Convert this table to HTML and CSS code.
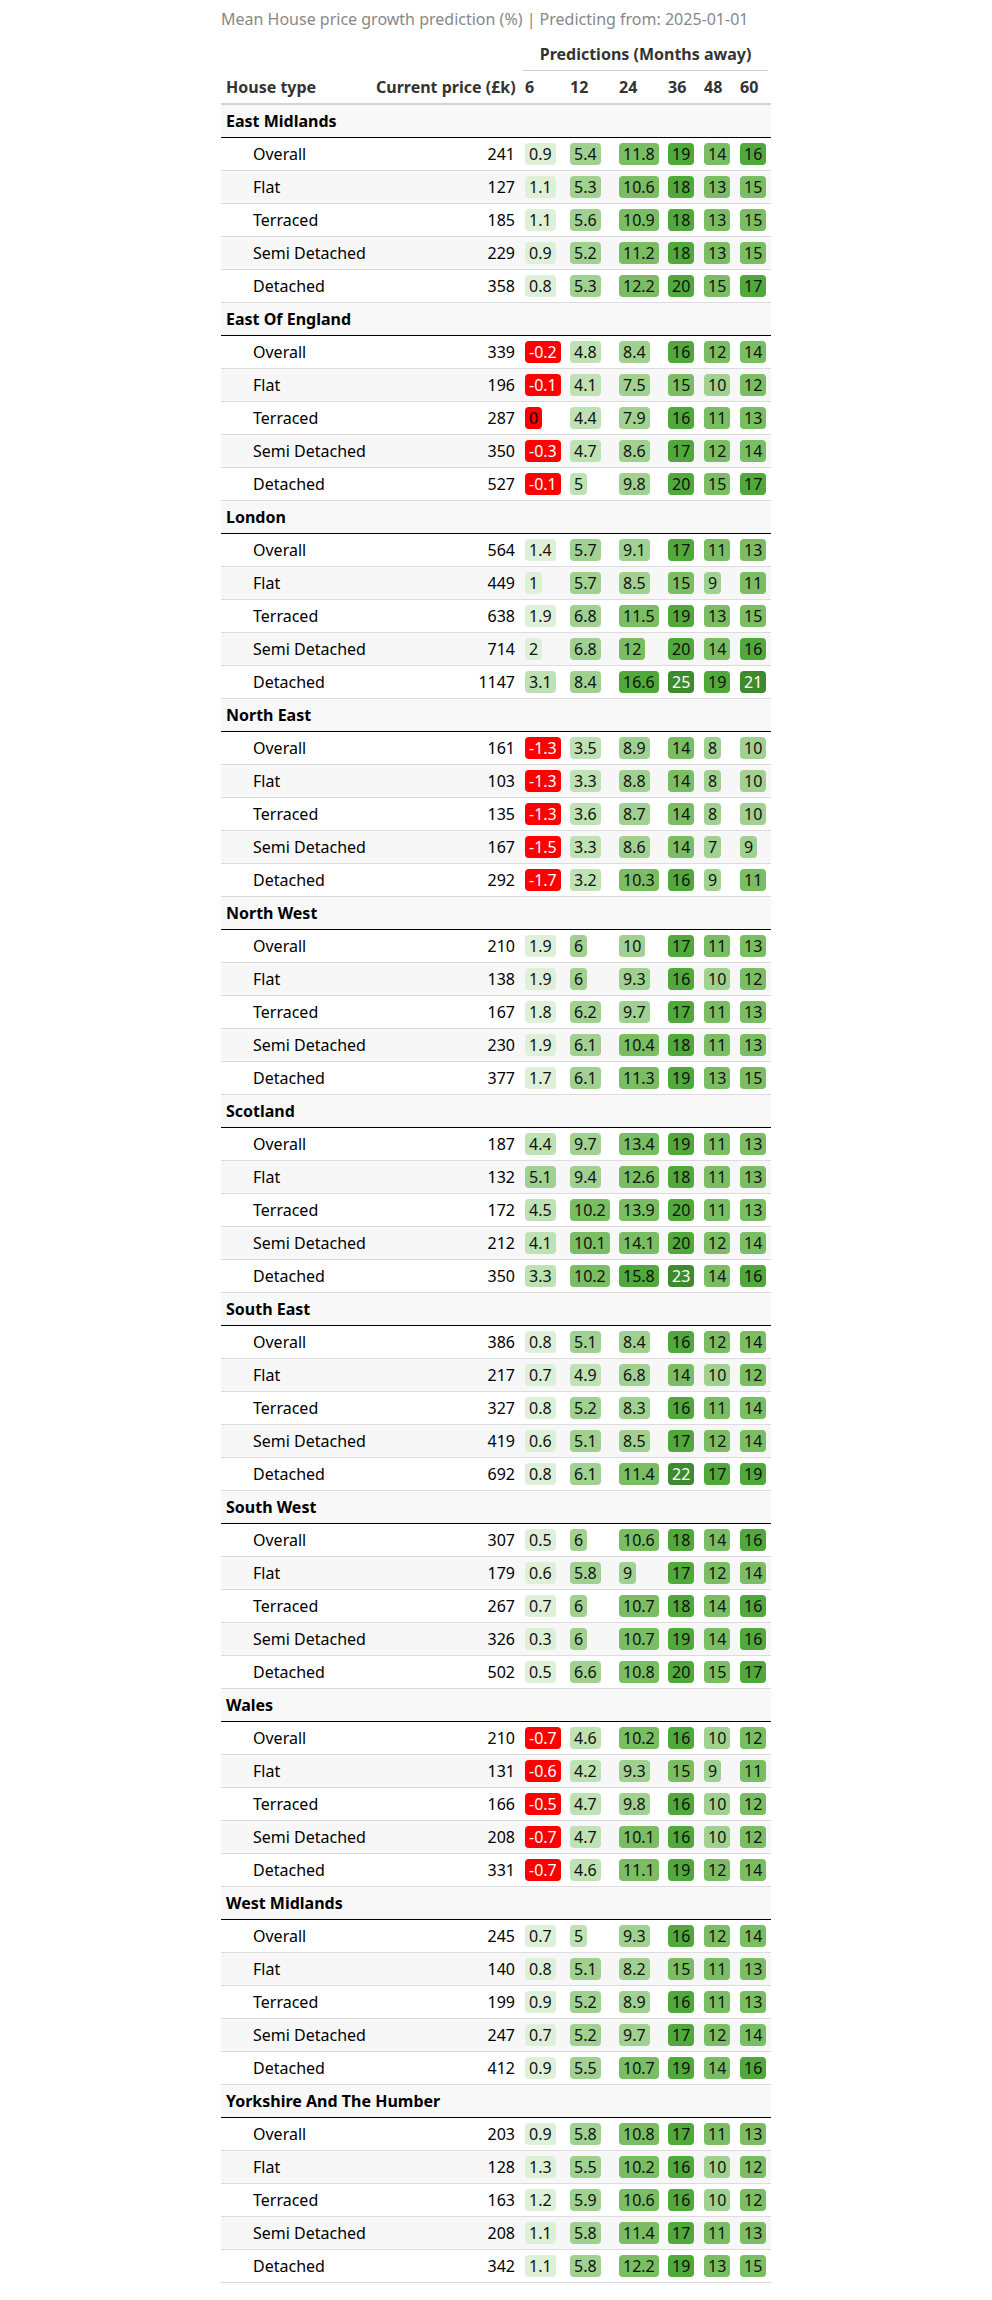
FILE: index.html
```html
<!DOCTYPE html>
<html lang="en">
<head>
<meta charset="utf-8">
<title>Mean House price growth prediction</title>
<link rel="stylesheet" href="styles.css">
</head>
<body>
<div class="wrap">
<div class="title">Mean House price growth prediction (%) | Predicting from: 2025-01-01</div>
<table class="gt">
<colgroup>
<col class="w-stub"><col class="w-price"><col class="w-6"><col class="w-12"><col class="w-24"><col class="w-36"><col class="w-48"><col class="w-60">
</colgroup>
<thead>
<tr>
<th rowspan="2" class="lbl left">House type</th>
<th rowspan="2" class="lbl right">Current price (£k)</th>
<th colspan="6" class="spanner"><div class="spanner-line">Predictions (Months away)</div></th>
</tr>
<tr>
<th class="lbl left">6</th><th class="lbl left">12</th><th class="lbl left">24</th><th class="lbl left">36</th><th class="lbl left">48</th><th class="lbl left">60</th>
</tr>
</thead>

<tbody>
<tr class="grp"><td colspan="8">East Midlands</td></tr>
<tr class="row"><td class="stub">Overall</td><td class="num">241</td><td><span class="p c1">0.9</span></td><td><span class="p c3">5.4</span></td><td><span class="p c4">11.8</span></td><td><span class="p c5">19</span></td><td><span class="p c4">14</span></td><td><span class="p c5">16</span></td></tr>
<tr class="row"><td class="stub">Flat</td><td class="num">127</td><td><span class="p c1">1.1</span></td><td><span class="p c3">5.3</span></td><td><span class="p c4">10.6</span></td><td><span class="p c5">18</span></td><td><span class="p c4">13</span></td><td><span class="p c4">15</span></td></tr>
<tr class="row"><td class="stub">Terraced</td><td class="num">185</td><td><span class="p c1">1.1</span></td><td><span class="p c3">5.6</span></td><td><span class="p c4">10.9</span></td><td><span class="p c5">18</span></td><td><span class="p c4">13</span></td><td><span class="p c4">15</span></td></tr>
<tr class="row"><td class="stub">Semi Detached</td><td class="num">229</td><td><span class="p c1">0.9</span></td><td><span class="p c3">5.2</span></td><td><span class="p c4">11.2</span></td><td><span class="p c5">18</span></td><td><span class="p c4">13</span></td><td><span class="p c4">15</span></td></tr>
<tr class="row"><td class="stub">Detached</td><td class="num">358</td><td><span class="p c1">0.8</span></td><td><span class="p c3">5.3</span></td><td><span class="p c4">12.2</span></td><td><span class="p c5">20</span></td><td><span class="p c4">15</span></td><td><span class="p c5">17</span></td></tr>
</tbody>

<tbody>
<tr class="grp"><td colspan="8">East Of England</td></tr>
<tr class="row"><td class="stub">Overall</td><td class="num">339</td><td><span class="p neg">-0.2</span></td><td><span class="p c2">4.8</span></td><td><span class="p c3">8.4</span></td><td><span class="p c5">16</span></td><td><span class="p c4">12</span></td><td><span class="p c4">14</span></td></tr>
<tr class="row"><td class="stub">Flat</td><td class="num">196</td><td><span class="p neg">-0.1</span></td><td><span class="p c2">4.1</span></td><td><span class="p c3">7.5</span></td><td><span class="p c4">15</span></td><td><span class="p c3">10</span></td><td><span class="p c4">12</span></td></tr>
<tr class="row"><td class="stub">Terraced</td><td class="num">287</td><td><span class="p zero">0</span></td><td><span class="p c2">4.4</span></td><td><span class="p c3">7.9</span></td><td><span class="p c5">16</span></td><td><span class="p c4">11</span></td><td><span class="p c4">13</span></td></tr>
<tr class="row"><td class="stub">Semi Detached</td><td class="num">350</td><td><span class="p neg">-0.3</span></td><td><span class="p c2">4.7</span></td><td><span class="p c3">8.6</span></td><td><span class="p c5">17</span></td><td><span class="p c4">12</span></td><td><span class="p c4">14</span></td></tr>
<tr class="row"><td class="stub">Detached</td><td class="num">527</td><td><span class="p neg">-0.1</span></td><td><span class="p c2">5</span></td><td><span class="p c3">9.8</span></td><td><span class="p c5">20</span></td><td><span class="p c4">15</span></td><td><span class="p c5">17</span></td></tr>
</tbody>

<tbody>
<tr class="grp"><td colspan="8">London</td></tr>
<tr class="row"><td class="stub">Overall</td><td class="num">564</td><td><span class="p c1">1.4</span></td><td><span class="p c3">5.7</span></td><td><span class="p c3">9.1</span></td><td><span class="p c5">17</span></td><td><span class="p c4">11</span></td><td><span class="p c4">13</span></td></tr>
<tr class="row"><td class="stub">Flat</td><td class="num">449</td><td><span class="p c1">1</span></td><td><span class="p c3">5.7</span></td><td><span class="p c3">8.5</span></td><td><span class="p c4">15</span></td><td><span class="p c3">9</span></td><td><span class="p c4">11</span></td></tr>
<tr class="row"><td class="stub">Terraced</td><td class="num">638</td><td><span class="p c1">1.9</span></td><td><span class="p c3">6.8</span></td><td><span class="p c4">11.5</span></td><td><span class="p c5">19</span></td><td><span class="p c4">13</span></td><td><span class="p c4">15</span></td></tr>
<tr class="row"><td class="stub">Semi Detached</td><td class="num">714</td><td><span class="p c1">2</span></td><td><span class="p c3">6.8</span></td><td><span class="p c4">12</span></td><td><span class="p c5">20</span></td><td><span class="p c4">14</span></td><td><span class="p c5">16</span></td></tr>
<tr class="row"><td class="stub">Detached</td><td class="num">1147</td><td><span class="p c2">3.1</span></td><td><span class="p c3">8.4</span></td><td><span class="p c5">16.6</span></td><td><span class="p c6">25</span></td><td><span class="p c5">19</span></td><td><span class="p c6">21</span></td></tr>
</tbody>

<tbody>
<tr class="grp"><td colspan="8">North East</td></tr>
<tr class="row"><td class="stub">Overall</td><td class="num">161</td><td><span class="p neg">-1.3</span></td><td><span class="p c2">3.5</span></td><td><span class="p c3">8.9</span></td><td><span class="p c4">14</span></td><td><span class="p c3">8</span></td><td><span class="p c3">10</span></td></tr>
<tr class="row"><td class="stub">Flat</td><td class="num">103</td><td><span class="p neg">-1.3</span></td><td><span class="p c2">3.3</span></td><td><span class="p c3">8.8</span></td><td><span class="p c4">14</span></td><td><span class="p c3">8</span></td><td><span class="p c3">10</span></td></tr>
<tr class="row"><td class="stub">Terraced</td><td class="num">135</td><td><span class="p neg">-1.3</span></td><td><span class="p c2">3.6</span></td><td><span class="p c3">8.7</span></td><td><span class="p c4">14</span></td><td><span class="p c3">8</span></td><td><span class="p c3">10</span></td></tr>
<tr class="row"><td class="stub">Semi Detached</td><td class="num">167</td><td><span class="p neg">-1.5</span></td><td><span class="p c2">3.3</span></td><td><span class="p c3">8.6</span></td><td><span class="p c4">14</span></td><td><span class="p c3">7</span></td><td><span class="p c3">9</span></td></tr>
<tr class="row"><td class="stub">Detached</td><td class="num">292</td><td><span class="p neg">-1.7</span></td><td><span class="p c2">3.2</span></td><td><span class="p c4">10.3</span></td><td><span class="p c5">16</span></td><td><span class="p c3">9</span></td><td><span class="p c4">11</span></td></tr>
</tbody>

<tbody>
<tr class="grp"><td colspan="8">North West</td></tr>
<tr class="row"><td class="stub">Overall</td><td class="num">210</td><td><span class="p c1">1.9</span></td><td><span class="p c3">6</span></td><td><span class="p c3">10</span></td><td><span class="p c5">17</span></td><td><span class="p c4">11</span></td><td><span class="p c4">13</span></td></tr>
<tr class="row"><td class="stub">Flat</td><td class="num">138</td><td><span class="p c1">1.9</span></td><td><span class="p c3">6</span></td><td><span class="p c3">9.3</span></td><td><span class="p c5">16</span></td><td><span class="p c3">10</span></td><td><span class="p c4">12</span></td></tr>
<tr class="row"><td class="stub">Terraced</td><td class="num">167</td><td><span class="p c1">1.8</span></td><td><span class="p c3">6.2</span></td><td><span class="p c3">9.7</span></td><td><span class="p c5">17</span></td><td><span class="p c4">11</span></td><td><span class="p c4">13</span></td></tr>
<tr class="row"><td class="stub">Semi Detached</td><td class="num">230</td><td><span class="p c1">1.9</span></td><td><span class="p c3">6.1</span></td><td><span class="p c4">10.4</span></td><td><span class="p c5">18</span></td><td><span class="p c4">11</span></td><td><span class="p c4">13</span></td></tr>
<tr class="row"><td class="stub">Detached</td><td class="num">377</td><td><span class="p c1">1.7</span></td><td><span class="p c3">6.1</span></td><td><span class="p c4">11.3</span></td><td><span class="p c5">19</span></td><td><span class="p c4">13</span></td><td><span class="p c4">15</span></td></tr>
</tbody>

<tbody>
<tr class="grp"><td colspan="8">Scotland</td></tr>
<tr class="row"><td class="stub">Overall</td><td class="num">187</td><td><span class="p c2">4.4</span></td><td><span class="p c3">9.7</span></td><td><span class="p c4">13.4</span></td><td><span class="p c5">19</span></td><td><span class="p c4">11</span></td><td><span class="p c4">13</span></td></tr>
<tr class="row"><td class="stub">Flat</td><td class="num">132</td><td><span class="p c3">5.1</span></td><td><span class="p c3">9.4</span></td><td><span class="p c4">12.6</span></td><td><span class="p c5">18</span></td><td><span class="p c4">11</span></td><td><span class="p c4">13</span></td></tr>
<tr class="row"><td class="stub">Terraced</td><td class="num">172</td><td><span class="p c2">4.5</span></td><td><span class="p c4">10.2</span></td><td><span class="p c4">13.9</span></td><td><span class="p c5">20</span></td><td><span class="p c4">11</span></td><td><span class="p c4">13</span></td></tr>
<tr class="row"><td class="stub">Semi Detached</td><td class="num">212</td><td><span class="p c2">4.1</span></td><td><span class="p c4">10.1</span></td><td><span class="p c4">14.1</span></td><td><span class="p c5">20</span></td><td><span class="p c4">12</span></td><td><span class="p c4">14</span></td></tr>
<tr class="row"><td class="stub">Detached</td><td class="num">350</td><td><span class="p c2">3.3</span></td><td><span class="p c4">10.2</span></td><td><span class="p c5">15.8</span></td><td><span class="p c6">23</span></td><td><span class="p c4">14</span></td><td><span class="p c5">16</span></td></tr>
</tbody>

<tbody>
<tr class="grp"><td colspan="8">South East</td></tr>
<tr class="row"><td class="stub">Overall</td><td class="num">386</td><td><span class="p c1">0.8</span></td><td><span class="p c3">5.1</span></td><td><span class="p c3">8.4</span></td><td><span class="p c5">16</span></td><td><span class="p c4">12</span></td><td><span class="p c4">14</span></td></tr>
<tr class="row"><td class="stub">Flat</td><td class="num">217</td><td><span class="p c1">0.7</span></td><td><span class="p c2">4.9</span></td><td><span class="p c3">6.8</span></td><td><span class="p c4">14</span></td><td><span class="p c3">10</span></td><td><span class="p c4">12</span></td></tr>
<tr class="row"><td class="stub">Terraced</td><td class="num">327</td><td><span class="p c1">0.8</span></td><td><span class="p c3">5.2</span></td><td><span class="p c3">8.3</span></td><td><span class="p c5">16</span></td><td><span class="p c4">11</span></td><td><span class="p c4">14</span></td></tr>
<tr class="row"><td class="stub">Semi Detached</td><td class="num">419</td><td><span class="p c1">0.6</span></td><td><span class="p c3">5.1</span></td><td><span class="p c3">8.5</span></td><td><span class="p c5">17</span></td><td><span class="p c4">12</span></td><td><span class="p c4">14</span></td></tr>
<tr class="row"><td class="stub">Detached</td><td class="num">692</td><td><span class="p c1">0.8</span></td><td><span class="p c3">6.1</span></td><td><span class="p c4">11.4</span></td><td><span class="p c6">22</span></td><td><span class="p c5">17</span></td><td><span class="p c5">19</span></td></tr>
</tbody>

<tbody>
<tr class="grp"><td colspan="8">South West</td></tr>
<tr class="row"><td class="stub">Overall</td><td class="num">307</td><td><span class="p c1">0.5</span></td><td><span class="p c3">6</span></td><td><span class="p c4">10.6</span></td><td><span class="p c5">18</span></td><td><span class="p c4">14</span></td><td><span class="p c5">16</span></td></tr>
<tr class="row"><td class="stub">Flat</td><td class="num">179</td><td><span class="p c1">0.6</span></td><td><span class="p c3">5.8</span></td><td><span class="p c3">9</span></td><td><span class="p c5">17</span></td><td><span class="p c4">12</span></td><td><span class="p c4">14</span></td></tr>
<tr class="row"><td class="stub">Terraced</td><td class="num">267</td><td><span class="p c1">0.7</span></td><td><span class="p c3">6</span></td><td><span class="p c4">10.7</span></td><td><span class="p c5">18</span></td><td><span class="p c4">14</span></td><td><span class="p c5">16</span></td></tr>
<tr class="row"><td class="stub">Semi Detached</td><td class="num">326</td><td><span class="p c1">0.3</span></td><td><span class="p c3">6</span></td><td><span class="p c4">10.7</span></td><td><span class="p c5">19</span></td><td><span class="p c4">14</span></td><td><span class="p c5">16</span></td></tr>
<tr class="row"><td class="stub">Detached</td><td class="num">502</td><td><span class="p c1">0.5</span></td><td><span class="p c3">6.6</span></td><td><span class="p c4">10.8</span></td><td><span class="p c5">20</span></td><td><span class="p c4">15</span></td><td><span class="p c5">17</span></td></tr>
</tbody>

<tbody>
<tr class="grp"><td colspan="8">Wales</td></tr>
<tr class="row"><td class="stub">Overall</td><td class="num">210</td><td><span class="p neg">-0.7</span></td><td><span class="p c2">4.6</span></td><td><span class="p c4">10.2</span></td><td><span class="p c5">16</span></td><td><span class="p c3">10</span></td><td><span class="p c4">12</span></td></tr>
<tr class="row"><td class="stub">Flat</td><td class="num">131</td><td><span class="p neg">-0.6</span></td><td><span class="p c2">4.2</span></td><td><span class="p c3">9.3</span></td><td><span class="p c4">15</span></td><td><span class="p c3">9</span></td><td><span class="p c4">11</span></td></tr>
<tr class="row"><td class="stub">Terraced</td><td class="num">166</td><td><span class="p neg">-0.5</span></td><td><span class="p c2">4.7</span></td><td><span class="p c3">9.8</span></td><td><span class="p c5">16</span></td><td><span class="p c3">10</span></td><td><span class="p c4">12</span></td></tr>
<tr class="row"><td class="stub">Semi Detached</td><td class="num">208</td><td><span class="p neg">-0.7</span></td><td><span class="p c2">4.7</span></td><td><span class="p c4">10.1</span></td><td><span class="p c5">16</span></td><td><span class="p c3">10</span></td><td><span class="p c4">12</span></td></tr>
<tr class="row"><td class="stub">Detached</td><td class="num">331</td><td><span class="p neg">-0.7</span></td><td><span class="p c2">4.6</span></td><td><span class="p c4">11.1</span></td><td><span class="p c5">19</span></td><td><span class="p c4">12</span></td><td><span class="p c4">14</span></td></tr>
</tbody>

<tbody>
<tr class="grp"><td colspan="8">West Midlands</td></tr>
<tr class="row"><td class="stub">Overall</td><td class="num">245</td><td><span class="p c1">0.7</span></td><td><span class="p c2">5</span></td><td><span class="p c3">9.3</span></td><td><span class="p c5">16</span></td><td><span class="p c4">12</span></td><td><span class="p c4">14</span></td></tr>
<tr class="row"><td class="stub">Flat</td><td class="num">140</td><td><span class="p c1">0.8</span></td><td><span class="p c3">5.1</span></td><td><span class="p c3">8.2</span></td><td><span class="p c4">15</span></td><td><span class="p c4">11</span></td><td><span class="p c4">13</span></td></tr>
<tr class="row"><td class="stub">Terraced</td><td class="num">199</td><td><span class="p c1">0.9</span></td><td><span class="p c3">5.2</span></td><td><span class="p c3">8.9</span></td><td><span class="p c5">16</span></td><td><span class="p c4">11</span></td><td><span class="p c4">13</span></td></tr>
<tr class="row"><td class="stub">Semi Detached</td><td class="num">247</td><td><span class="p c1">0.7</span></td><td><span class="p c3">5.2</span></td><td><span class="p c3">9.7</span></td><td><span class="p c5">17</span></td><td><span class="p c4">12</span></td><td><span class="p c4">14</span></td></tr>
<tr class="row"><td class="stub">Detached</td><td class="num">412</td><td><span class="p c1">0.9</span></td><td><span class="p c3">5.5</span></td><td><span class="p c4">10.7</span></td><td><span class="p c5">19</span></td><td><span class="p c4">14</span></td><td><span class="p c5">16</span></td></tr>
</tbody>

<tbody>
<tr class="grp"><td colspan="8">Yorkshire And The Humber</td></tr>
<tr class="row"><td class="stub">Overall</td><td class="num">203</td><td><span class="p c1">0.9</span></td><td><span class="p c3">5.8</span></td><td><span class="p c4">10.8</span></td><td><span class="p c5">17</span></td><td><span class="p c4">11</span></td><td><span class="p c4">13</span></td></tr>
<tr class="row"><td class="stub">Flat</td><td class="num">128</td><td><span class="p c1">1.3</span></td><td><span class="p c3">5.5</span></td><td><span class="p c4">10.2</span></td><td><span class="p c5">16</span></td><td><span class="p c3">10</span></td><td><span class="p c4">12</span></td></tr>
<tr class="row"><td class="stub">Terraced</td><td class="num">163</td><td><span class="p c1">1.2</span></td><td><span class="p c3">5.9</span></td><td><span class="p c4">10.6</span></td><td><span class="p c5">16</span></td><td><span class="p c3">10</span></td><td><span class="p c4">12</span></td></tr>
<tr class="row"><td class="stub">Semi Detached</td><td class="num">208</td><td><span class="p c1">1.1</span></td><td><span class="p c3">5.8</span></td><td><span class="p c4">11.4</span></td><td><span class="p c5">17</span></td><td><span class="p c4">11</span></td><td><span class="p c4">13</span></td></tr>
<tr class="row"><td class="stub">Detached</td><td class="num">342</td><td><span class="p c1">1.1</span></td><td><span class="p c3">5.8</span></td><td><span class="p c4">12.2</span></td><td><span class="p c5">19</span></td><td><span class="p c4">13</span></td><td><span class="p c4">15</span></td></tr>
</tbody>
</table>
</div>
</body>
</html>
```
FILE: styles.css
```css
html, body {
  background: #ffffff;
}
body {
  margin: 8px;
  font-family: "Noto Sans", "Open Sans", "DejaVu Sans", sans-serif;
  font-size: 16px;
  color: #000;
}
.wrap {
  width: 550px;
  margin: 0 auto;
}
.title {
  font-size: 16px;
  line-height: 22px;
  color: #888888;
  margin-bottom: 8px;
}
.gt {
  width: 550px;
  border-collapse: collapse;
  table-layout: fixed;
  font-size: 16px;
}
.w-stub { width: 150px; }
.w-price { width: 149px; }
.w-6 { width: 45px; }
.w-12 { width: 49px; }
.w-24 { width: 49px; }
.w-36 { width: 36px; }
.w-48 { width: 36px; }
.w-60 { width: 36px; }

.gt th, .gt td {
  padding: 5px;
  line-height: 22px;
  white-space: nowrap;
}
.gt th {
  color: #333333;
  font-weight: 700;
}
.gt th.lbl {
  vertical-align: bottom;
  border-bottom: 2px solid #d3d3d3;
}
.left { text-align: left; }
.right { text-align: right; }
.gt th.spanner {
  padding: 5px 3px 0 3px;
  text-align: center;
}
.spanner-line {
  padding-bottom: 5px;
  border-bottom: 1px solid #d3d3d3;
}

.grp td {
  font-weight: 700;
  color: #000;
  background: #f8f8f8;
  border-bottom: 1px solid #000;
}
.row td {
  border-bottom: 1px solid #dcdcdc;
  color: #000;
}
.row:nth-child(odd) td {
  background: #f7f7f7;
}
.stub {
  padding-left: 32px !important;
}
.num {
  text-align: right;
}
.p {
  padding: 0 4px;
  border-radius: 4px;
  color: #111;
}
.c1 { background: #dff0d8; }
.c2 { background: #bee2b4; }
.c3 { background: #a0d191; }
.c4 { background: #7abd63; }
.c5 { background: #51a83b; }
.c6 { background: #3f8a2e; color: #fff; }
.neg { background: #ff0000; color: #fff; }
.zero { background: #ff0000; color: #000; }
```
